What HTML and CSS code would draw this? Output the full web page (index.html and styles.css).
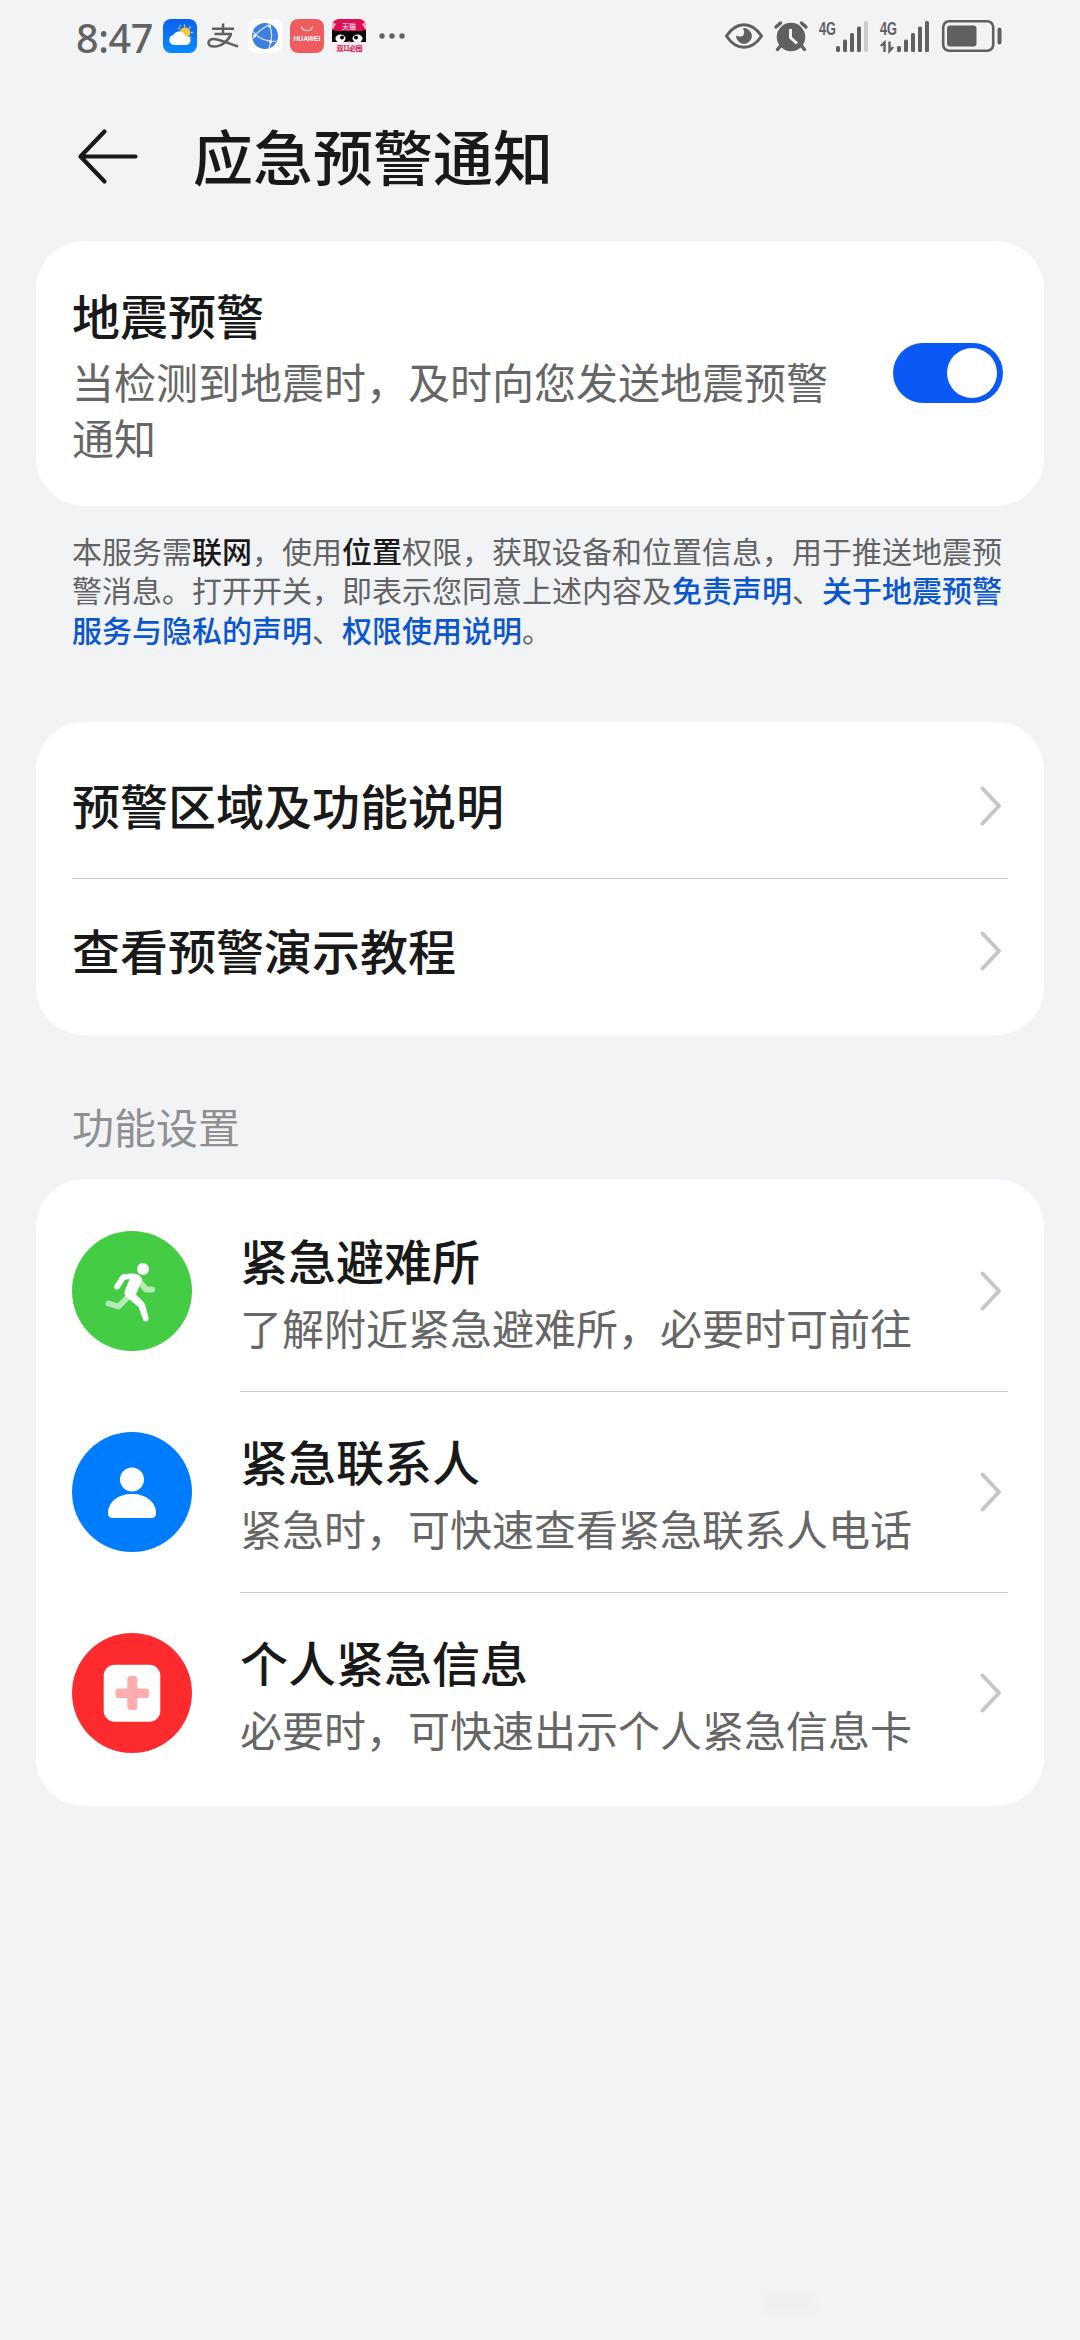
FILE: index.html
```html
<!DOCTYPE html>
<html lang="zh-CN">
<head>
<meta charset="utf-8">
<title>应急预警通知</title>
<link rel="stylesheet" href="styles.css">
</head>
<body>
<div class="screen">
  <div class="status">
    <div class="status-left">
      <span class="clock">8:47</span>
      <svg class="app" viewBox="0 0 34 34">
        <defs><linearGradient id="sky" x1="0" y1="0" x2="0" y2="1"><stop offset="0" stop-color="#0b60ee"/><stop offset="1" stop-color="#068cff"/></linearGradient></defs>
        <rect width="34" height="34" rx="8" fill="url(#sky)"/>
        <g stroke="#c3cf8c" stroke-width="1.3" stroke-linecap="round"><path d="M15.2 9l1 1M21.5 5.8v1.6M27.5 8l-1.2 1.2M29.6 13.5h-1.6M27.6 19l-1-1M17 6.4l.5 1"/></g>
        <circle cx="22" cy="13.5" r="5.2" fill="#f6c744"/>
        <path d="M11 26a5 5 0 0 1-.6-9.9 6.3 6.3 0 0 1 11.8 1.2A4.4 4.4 0 1 1 23 26z" fill="#fff"/>
      </svg>
      <svg class="pay" viewBox="0 0 32 26" fill="none" stroke="#5f6062" stroke-width="2.5" stroke-linecap="butt">
        <path d="M5 5.8h22M16 .5v10M7.500 11h17.500"/>
        <path d="M24 11C21 19 14 23.500 7 23.500c-7.500 0-7-7.500-.5-7.500C12 16 20 20 31 23.500" />
      </svg>
      <svg class="app globe" viewBox="0 0 34 34">
        <rect width="34" height="34" rx="8" fill="#fff"/>
        <circle cx="17" cy="17" r="13" fill="#3f7fe0"/>
        <g stroke="#dbe8fb" stroke-width="1.2" fill="none"><path d="M22 5.500C14 9 9 13 4.500 20M5 12.500c5 7 12 10 23 10M21.500 6c3 7 3 14-.5 23"/></g>
        <circle cx="21.500" cy="7" r="1.500" fill="#fff"/><circle cx="6.500" cy="17" r="1.500" fill="#fff"/><circle cx="22.500" cy="22.500" r="1.500" fill="#fff"/>
      </svg>
      <svg class="app" viewBox="0 0 34 34">
        <rect width="34" height="34" rx="8" fill="#ee5c5f"/>
        <path d="M11.500 7.500c1 5.500 10 5.500 11 0" fill="none" stroke="#ffd9d9" stroke-width="1.300"/>
        <text class="mark-hw" x="3.500" y="22" textLength="27" lengthAdjust="spacingAndGlyphs">HUAWEI</text>
      </svg>
      <svg class="app" viewBox="0 0 34 34">
        <defs><clipPath id="tile"><rect width="34" height="34" rx="7"/></clipPath></defs>
        <g clip-path="url(#tile)">
          <rect width="34" height="34" fill="#fbeaf0"/>
          <rect width="34" height="13" fill="#dd1055"/>
          <path d="M0 11l5 1h24l5-1v12H0z" fill="#090909"/>
          <path d="M0 3l4 2-3 5H0zM34 3l-4 2 3 5h1z" fill="#f7a8c3"/>
          <ellipse cx="8.500" cy="19.500" rx="5" ry="4" fill="#fff"/><ellipse cx="25.500" cy="19.500" rx="5" ry="4" fill="#fff"/>
          <circle cx="10" cy="18.500" r="2" fill="#090909"/><circle cx="24" cy="18.500" r="2" fill="#090909"/>
          <path d="M15 22h4l-2 2z" fill="#e54b82"/>
        </g>
        <text class="mark-tm" x="10" y="9.500">天猫</text>
        <text class="mark-tm red" x="4.500" y="31.500" textLength="26">双11必囤</text>
      </svg>
      <svg class="dots" viewBox="0 0 27 8" fill="#616264"><circle cx="4" cy="4" r="2.700"/><circle cx="14" cy="4" r="2.700"/><circle cx="24" cy="4" r="2.700"/></svg>
    </div>
    <div class="status-right">
      <svg class="eye" viewBox="0 0 38 26">
        <path d="M1.500 13C6 6 12 1.700 19 1.700S32 6 36.500 13C32 20 26 24.300 19 24.300S6 20 1.500 13z" fill="none" stroke="#5f6062" stroke-width="3"/>
        <path d="M18.500 5.600A7.400 7.400 0 1 1 11.600 13c2.200 1.600 6.500 1.500 7.600-1.500.8-2.200.4-4-.7-5.900z" fill="#5f6062" stroke="#5f6062" stroke-width="1"/>
      </svg>
      <svg class="alarm" viewBox="0 0 34 31">
        <path d="M2 6l4.500-4M32 6l-4.500-4M6 25.500l-2.500 3M28 25.500l2.500 3" stroke="#5f6062" stroke-width="3.400" stroke-linecap="round"/>
        <circle cx="17" cy="16" r="14.300" fill="#5f6062"/>
        <path d="M16.500 8v8.500l6.500 6" fill="none" stroke="#f2f3f5" stroke-width="3"/>
      </svg>
      <svg class="signal" viewBox="0 0 50 31">
        <text class="net" x="0" y="14" textLength="17" lengthAdjust="spacingAndGlyphs">4G</text>
        <g fill="#5f6062"><rect x="17" y="25" width="4" height="6" rx="1.500"/><rect x="24" y="18.500" width="4" height="12.500" rx="1.500"/><rect x="31" y="12" width="4" height="19" rx="1.500"/><rect x="38" y="5.500" width="4" height="25.500" rx="1.500"/></g>
        <rect x="45" y="0" width="4" height="31" rx="1.500" fill="#cacbcd"/>
      </svg>
      <svg class="signal second" viewBox="0 0 50 31">
        <text class="net" x="0" y="14" textLength="17" lengthAdjust="spacingAndGlyphs">4G</text>
        <path d="M.8 25l3.700-3.500V31M9.500 20.500v9.500l3.700-4" fill="none" stroke="#5f6062" stroke-width="2.400"/>
        <g fill="#5f6062"><rect x="17" y="25" width="4" height="6" rx="1.500"/><rect x="24" y="18.500" width="4" height="12.500" rx="1.500"/><rect x="31" y="12" width="4" height="19" rx="1.500"/><rect x="38" y="5.500" width="4" height="25.500" rx="1.500"/><rect x="45" y="0" width="4" height="31" rx="1.500"/></g>
      </svg>
      <svg class="battery" viewBox="0 0 60 32">
        <rect x="1.200" y="1.200" width="50" height="29.600" rx="6" fill="none" stroke="#5f6062" stroke-width="2.600"/>
        <rect x="5" y="5.500" width="29.500" height="21" rx="3" fill="#5f6062"/>
        <rect x="55.500" y="7.500" width="4" height="17" rx="2" fill="#5f6062"/>
      </svg>
    </div>
  </div>

  <header class="header">
    <svg class="back" viewBox="0 0 60 56" fill="none" stroke="#191919" stroke-width="4.200" stroke-linecap="round" stroke-linejoin="round"><path d="M26.500 2.500L2.500 27.500 26.500 52.500M3 27.500h54.500"/></svg>
    <h1>应急预警通知</h1>
  </header>

  <section class="card quake">
    <div class="quake-text">
      <h2>地震预警</h2>
      <p>当检测到地震时，及时向您发送地震预警通知</p>
    </div>
    <span class="switch"><span class="knob"></span></span>
  </section>

  <p class="notice">本服务需<b>联网</b>，使用<b>位置</b>权限，获取设备和位置信息，用于推送地震预警消息。打开开关，即表示您同意上述内容及<a>免责声明</a>、<a>关于地震预警服务与隐私的声明</a>、<a>权限使用说明</a>。</p>

  <section class="card links">
    <div class="row">
      <h2>预警区域及功能说明</h2>
      <svg class="chevron" viewBox="0 0 22 40"><path d="M2.500 2.500L19 20 2.500 37.500"/></svg>
    </div>
    <div class="row">
      <h2>查看预警演示教程</h2>
      <svg class="chevron" viewBox="0 0 22 40"><path d="M2.500 2.500L19 20 2.500 37.500"/></svg>
    </div>
  </section>

  <h3 class="group-title">功能设置</h3>

  <section class="card features">
    <div class="feature">
      <svg class="badge" viewBox="0 0 120 120">
        <circle cx="60" cy="60" r="60" fill="#44cd44"/>
        <g fill="none" stroke="#b4ebb4" stroke-width="6" stroke-linecap="round" stroke-linejoin="round"><path d="M67 50l7 8.500h6M56 66l-9.500 9.500L36.500 72.500"/></g>
        <circle cx="71" cy="38" r="6" fill="#fff"/>
        <path d="M58.500 42.500c4-.5 8 .5 10.500 3.500 1.500 2 .5 4-.3 6L64 63.500 71.500 71c1 1.500 1.500 2.500 2 4l3 11.500c1 4-4 5.500-5.500 2L66.500 76l-12-10c-2.500-2-2.500-4-1.500-6.500L57.500 48l-4.500.7-5.500 8.600c-2 3-6.800.6-5-3l6-9.300c1-1.300 1.500-1.500 3-1.700z" fill="#fff"/>
      </svg>
      <div class="feature-body">
        <div class="feature-text"><h2>紧急避难所</h2><p>了解附近紧急避难所，必要时可前往</p></div>
        <svg class="chevron" viewBox="0 0 22 40"><path d="M2.500 2.500L19 20 2.500 37.500"/></svg>
      </div>
    </div>
    <div class="feature">
      <svg class="badge" viewBox="0 0 120 120">
        <circle cx="60" cy="60" r="60" fill="#007dff"/>
        <circle cx="60" cy="47.500" r="12" fill="#fff"/>
        <path d="M41 86c-3.500 0-5-1.500-5-5 0-11 10-19 24-19s24 8 24 19c0 3.500-1.500 5-5 5z" fill="#fff"/>
      </svg>
      <div class="feature-body">
        <div class="feature-text"><h2>紧急联系人</h2><p>紧急时，可快速查看紧急联系人电话</p></div>
        <svg class="chevron" viewBox="0 0 22 40"><path d="M2.500 2.500L19 20 2.500 37.500"/></svg>
      </div>
    </div>
    <div class="feature">
      <svg class="badge" viewBox="0 0 120 120">
        <circle cx="60" cy="60" r="60" fill="#fd2b2d"/>
        <rect x="31.700" y="31.700" width="56.600" height="57" rx="11" fill="#fff"/>
        <rect x="55.300" y="43" width="10" height="34" rx="3" fill="#ffacae"/>
        <rect x="43.500" y="55.500" width="33.500" height="9.500" rx="3" fill="#ffacae"/>
      </svg>
      <div class="feature-body">
        <div class="feature-text"><h2>个人紧急信息</h2><p>必要时，可快速出示个人紧急信息卡</p></div>
        <svg class="chevron" viewBox="0 0 22 40"><path d="M2.500 2.500L19 20 2.500 37.500"/></svg>
      </div>
    </div>
  </section>
  <div class="smudge"></div>
</div>
</body>
</html>
```

FILE: styles.css
```css
* { box-sizing: border-box; margin: 0; padding: 0; }

body {
  background: #f2f3f5;
  font-family: "Noto Sans CJK SC", sans-serif;
  color: #191919;
}

.screen {
  position: relative;
  width: 1080px;
  height: 2340px;
  overflow: hidden;
}

svg { display: block; flex: none; overflow: visible; }

/* Status bar */
.status {
  display: flex;
  justify-content: space-between;
  height: 72px;
  padding: 0 78px 0 76px;
}
.status-left, .status-right { display: flex; align-items: center; }
.clock {
  width: 87px;
  font: 500 39.500px/72px "Noto Sans", Roboto, sans-serif;
  letter-spacing: -0.400px;
  color: #616264;
  padding-top: 4px;
}
.app { width: 34px; height: 34px; }
.pay { width: 32px; height: 26px; margin: 0 9px 0 10px; }
.globe { margin-right: 8px; }
.app + .app:not(.globe) + .app { margin-left: 8px; }
.dots { width: 27px; height: 8px; margin-left: 12px; }
.mark-hw { font: 700 6.500px "Liberation Sans", sans-serif; fill: #fff; }
.mark-tm { font: 700 7px "Noto Sans CJK SC", sans-serif; fill: #fbd; }
.red { fill: #d4124f; }
.eye { width: 38px; height: 26px; }
.alarm { width: 34px; height: 31px; margin: 0 11px; }
.signal { width: 50px; height: 31px; }
.second { margin: 0 12px 0 11px; }
.battery { width: 60px; height: 32px; }
.net { font: 700 18.500px "Liberation Sans", sans-serif; fill: #5f6062; }

/* Title bar */
.header {
  display: flex;
  align-items: center;
  gap: 55px;
  height: 169px;
  padding: 0 78px;
}
.back { width: 60px; height: 56px; }
h1 { font-size: 60px; line-height: 80px; font-weight: 500; margin-top: -4px; }

.card {
  margin: 0 36px;
  padding: 12px 36px;
  border-radius: 48px;
  background: #fff;
}
h2 { font-size: 48px; line-height: 64px; font-weight: 500; }
.card p { font-size: 42px; line-height: 56px; color: #666; }

.quake {
  display: flex;
  align-items: center;
  justify-content: space-between;
  height: 265px;
  padding-right: 41px;
}
.quake-text { width: 770px; }
.quake p { margin-top: 7px; }
.switch {
  display: flex;
  align-items: center;
  justify-content: flex-end;
  width: 110px;
  height: 60px;
  margin-top: -1px;
  padding: 0 6px;
  border-radius: 30px;
  background: #0a59f7;
}
.knob { width: 50px; height: 50px; border-radius: 50%; background: #fff; }

.notice {
  margin: 25px 78px 0 72px;
  font-size: 30px;
  line-height: 39.300px;
  color: #626365;
}
.notice b { font-weight: 500; color: #191919; }
.notice a { font-weight: 500; color: #0a56cf; }

.links { margin-top: 73px; }
.row {
  display: flex;
  align-items: center;
  justify-content: space-between;
  height: 144px;
  padding-right: 6px;
}
.row h2 { padding-bottom: 4px; }
.row + .row { height: 145px; border-top: 1px solid #c9c9c9; }
.chevron {
  width: 22px;
  height: 40px;
  fill: none;
  stroke: #c6c6c6;
  stroke-width: 4px;
  stroke-linecap: round;
  stroke-linejoin: round;
}

.group-title {
  margin: 63px 72px 0;
  font-size: 42px;
  line-height: 56px;
  font-weight: 400;
  color: #8f9092;
}

.features { margin-top: 25px; }
.feature { display: flex; align-items: center; gap: 48px; }
.badge { width: 120px; height: 120px; }
.feature-body {
  display: flex;
  flex: 1;
  align-items: center;
  justify-content: space-between;
  height: 201px;
  padding-right: 6px;
  border-bottom: 1px solid #c9c9c9;
}
.feature:last-child .feature-body { border-bottom-color: transparent; }
.feature-text p { margin-top: 8px; }

/* Faint overlay in the lower right corner */
.smudge {
  position: absolute;
  left: 764px;
  top: 2292px;
  width: 52px;
  height: 21px;
  background: #eff0f2;
  filter: blur(2px);
}
```
